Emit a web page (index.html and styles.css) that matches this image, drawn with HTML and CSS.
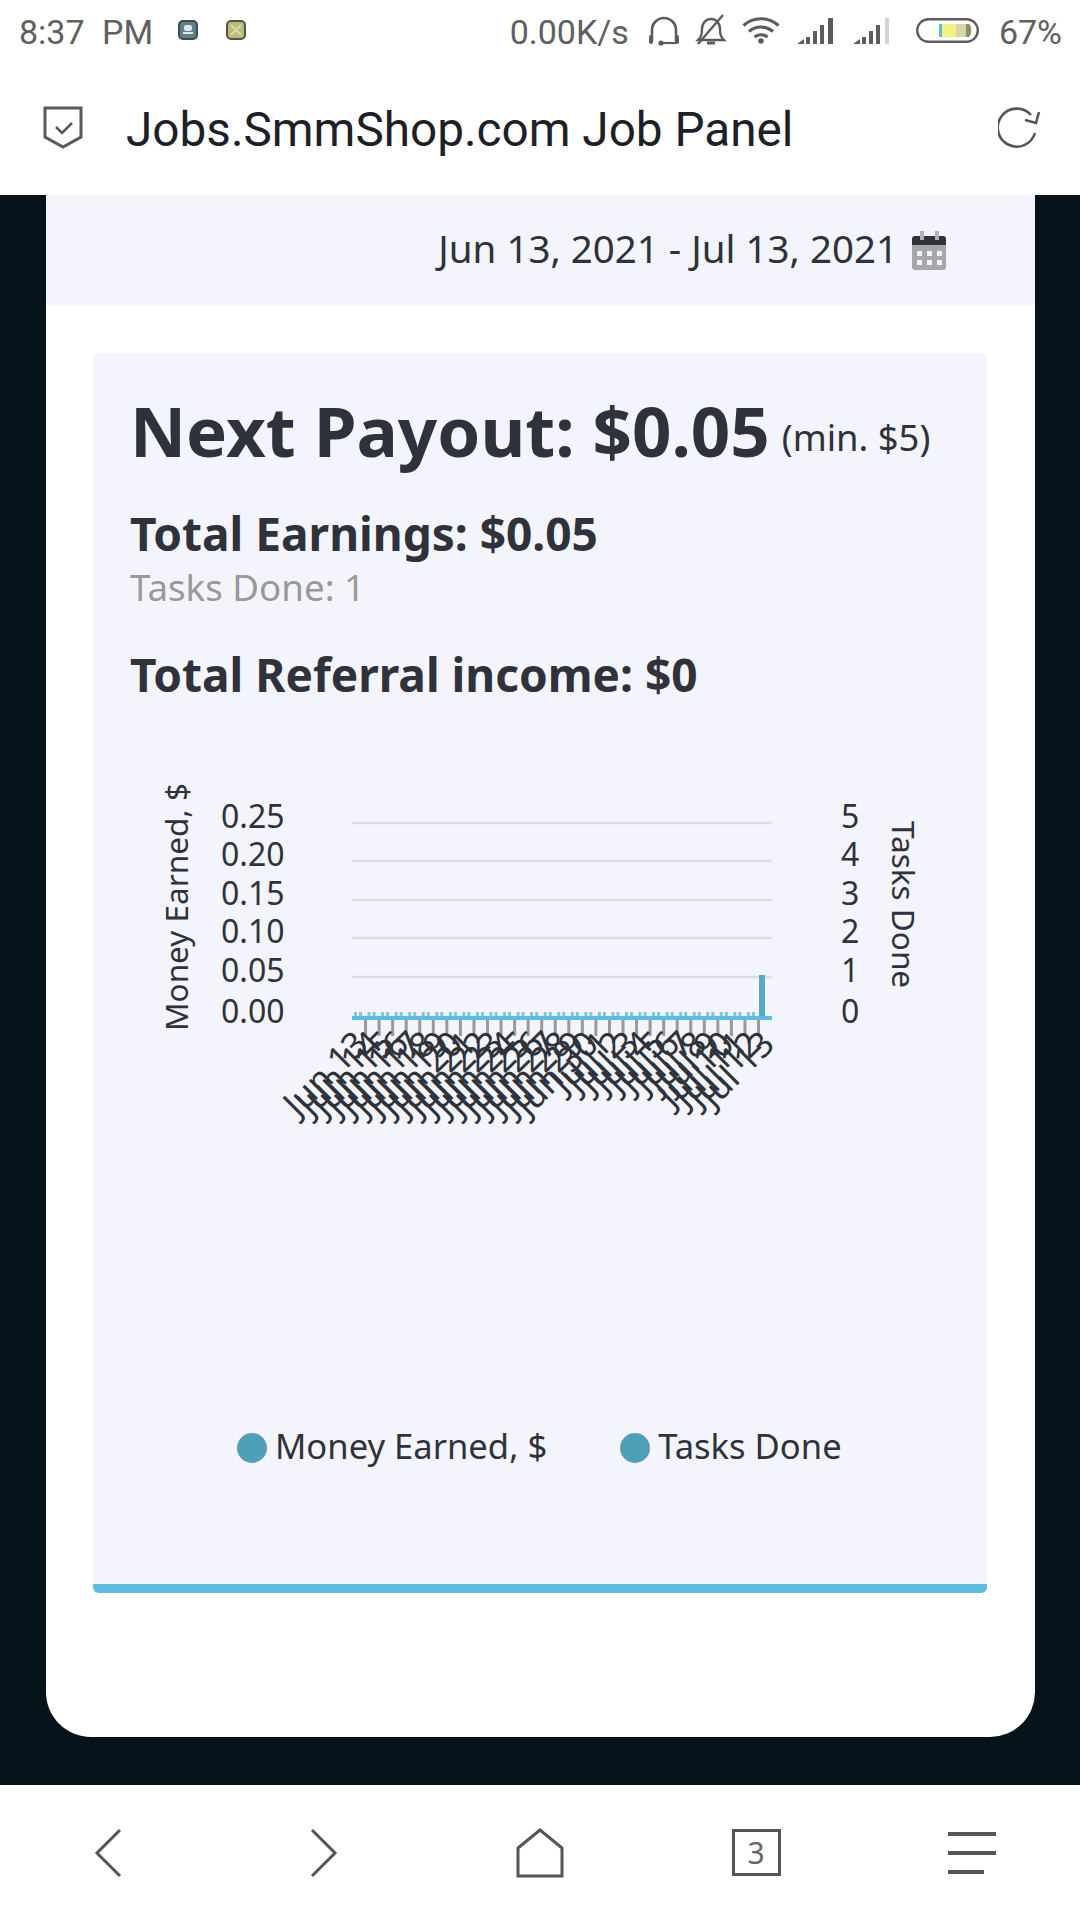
FILE: index.html
```html
<!DOCTYPE html>
<html lang="en">

<head>
    <meta charset="UTF-8">
    <meta name="viewport" content="width=device-width, initial-scale=1.0">
    <title>Jobs.SmmShop.com Job Panel</title>
    <link rel="stylesheet" href="styles.css">
</head>

<body>
    <div class="status">
        <div class="status-left">
            <span class="clock">8:37 PM</span>
            <svg class="notif notif-a" width="20" height="20" viewBox="0 0 20 20">
                <rect x="1" y="1" width="18" height="18" rx="4" fill="#5f7f88" stroke="#3f4a4e" stroke-width="2" />
                <rect x="6" y="5" width="8" height="6" rx="2" fill="#dfe6e8" />
                <path d="M5 13h10" stroke="#dfe6e8" stroke-width="2" />
            </svg>
            <svg class="notif notif-b" width="20" height="20" viewBox="0 0 20 20">
                <rect x="1" y="1" width="18" height="18" rx="4" fill="#b9bb7c" stroke="#55563f" stroke-width="2" />
                <path d="M5 5l10 10M15 5L5 15" stroke="#d9dba8" stroke-width="2" />
            </svg>
        </div>
        <div class="status-right">
            <span class="speed">0.00K/s</span>
            <svg class="ico-head" width="32" height="30" viewBox="0 0 32 30">
                <path d="M4 25V14a12 12 0 0 1 24 0v11" fill="none" stroke="#5c5c5c" stroke-width="2.6" />
                <rect x="1" y="19" width="4" height="9" rx="2" fill="#5c5c5c" />
                <rect x="27" y="19" width="4" height="9" rx="2" fill="#5c5c5c" />
                <path d="M12 27h16" stroke="#5c5c5c" stroke-width="2.2" />
                <circle cx="13" cy="27" r="2.6" fill="#5c5c5c" />
            </svg>
            <svg class="ico-bell" width="32" height="32" viewBox="0 0 32 32">
                <path d="M3 26c3-3 4-5 4-11s4-10 9-10 9 4 9 10 1 8 4 11z" fill="none" stroke="#5c5c5c" stroke-width="2.4" />
                <path d="M12 29h8" stroke="#5c5c5c" stroke-width="3" />
                <path d="M3 30L28 1" stroke="#5c5c5c" stroke-width="2.4" />
            </svg>
            <svg class="ico-wifi" width="38" height="28" viewBox="0 0 38 28">
                <path d="M1.5 9.5c10-9 25-9 35 0M7 15.5c7-6 17-6 24 0M12.5 21c3.500-3 9.500-3 13 0" fill="none" stroke="#5c5c5c" stroke-width="3.2" />
                <circle cx="19" cy="25" r="2.800" fill="#5c5c5c" />
            </svg>
            <svg class="ico-sig" width="38" height="26" viewBox="0 0 38 26">
                <path d="M0 26l7-5v5zM9 19h4v7H9zM16 13h4v13h-4zM23 7h4v19h-4zM31 0h5v26h-5z" fill="#5c5c5c" />
            </svg>
            <svg class="ico-sig2" width="38" height="26" viewBox="0 0 38 26">
                <path d="M0 26l7-5v5zM9 19h4v7H9zM16 13h4v13h-4zM23 7h4v19h-4z" fill="#5c5c5c" />
                <path d="M32 0h4v26h-4z" fill="#d4d4d4" />
            </svg>
            <svg class="ico-batt" width="63" height="25" viewBox="0 0 63 25">
                <rect x="1.200" y="1.200" width="60.600" height="22.600" rx="11.300" fill="#fff" stroke="#5c5c5c" stroke-width="2.400" />
                <rect x="23" y="6" width="3" height="13" fill="#5bbde4" />
                <rect x="26" y="6" width="14" height="13" fill="#f5f27f" />
                <rect x="40" y="6" width="10" height="13" fill="#d6d6a8" />
                <path d="M50 6h3c3 2 3 11 0 13h-3z" fill="#8f8f66" />
            </svg>
            <span class="batt-pct">67%</span>
        </div>
    </div>

    <header class="address">
        <svg class="shield" width="40" height="44" viewBox="0 0 40 44">
            <path d="M2 2h36v29L20 41 2 31z" fill="none" stroke="#5a5a5a" stroke-width="3" />
            <path d="M13 21l6 6 10-10" fill="none" stroke="#5a5a5a" stroke-width="2.600" />
        </svg>
        <span class="page-title">Jobs.SmmShop.com Job Panel</span>
        <svg class="reload" width="44" height="44" viewBox="0 0 44 44">
            <path d="M37 27A19 19 0 1 1 33 9" fill="none" stroke="#555" stroke-width="2.600" />
            <path d="M41 6l-3 11-11-3" fill="none" stroke="#555" stroke-width="2.600" />
        </svg>
    </header>

    <main class="backdrop">
        <div class="panel">
            <div class="range">
                <span>Jun 13, 2021 - Jul 13, 2021</span>
                <svg width="34" height="39" viewBox="0 0 34 39">
                    <path d="M0 14h34v22a3 3 0 0 1-3 3H3a3 3 0 0 1-3-3z" fill="#a6a7ac" />
                    <path d="M3 5h28a3 3 0 0 1 3 3v6H0V8a3 3 0 0 1 3-3z" fill="#2f323a" />
                    <rect x="8" y="0" width="4" height="9" fill="#b0b1b5" />
                    <rect x="23" y="0" width="4" height="9" fill="#b0b1b5" />
                    <path d="M5 20h5v5H5zM15 20h5v5h-5zM25 20h5v5h-5zM5 29h5v5H5zM15 29h5v5h-5zM25 29h5v5h-5z" fill="#f3f4fb" />
                </svg>
            </div>

            <section class="card">
                <h1 class="payout">Next Payout: $0.05 <small>(min. $5)</small></h1>
                <h2 class="earn">Total Earnings: $0.05</h2>
                <p class="tasks">Tasks Done: 1</p>
                <h2 class="earn referral">Total Referral income: $0</h2>

                <svg id="chart" class="chart" width="894" height="380" viewBox="93 780 894 380"></svg>

                <div class="legend">
                    <span class="legend-item"><i class="dot"></i>Money Earned, $</span>
                    <span class="legend-item"><i class="dot"></i>Tasks Done</span>
                </div>
            </section>
        </div>
    </main>

    <nav class="nav">
        <svg width="30" height="50" viewBox="0 0 30 50">
            <path d="M27 2L4 25l23 23" fill="none" stroke="#555" stroke-width="3" />
        </svg>
        <svg width="30" height="50" viewBox="0 0 30 50">
            <path d="M3 2l23 23L3 48" fill="none" stroke="#555" stroke-width="3" />
        </svg>
        <svg width="48" height="50" viewBox="0 0 48 50">
            <path d="M24 2L2 20v28h44V20z" fill="none" stroke="#555" stroke-width="3" />
        </svg>
        <div class="tabs">3</div>
        <div class="menu">
            <span></span>
            <span></span>
            <span class="short"></span>
        </div>
    </nav>

    <script src="chart.js"></script>
</body>

</html>
```

FILE: styles.css
```css
* {
    box-sizing: border-box;
}

body {
    margin: 0;
    width: 1080px;
    height: 1920px;
    display: flex;
    flex-direction: column;
    background-color: white;
    font-family: 'Noto Sans', sans-serif;
    color: #2f323a;
    overflow: hidden;
}

.status {
    height: 60px;
    padding: 13px 18px 0 19px;
    display: flex;
    justify-content: space-between;
    font-family: Roboto, sans-serif;
    font-size: 34px;
    color: #606060;
}

.status-left,
.status-right {
    display: flex;
    align-items: flex-start;
}

.clock {
    word-spacing: 9px;
    line-height: 38px;
}

.notif {
    margin-top: 7px;
}

.notif-a {
    margin-left: 25px;
}

.notif-b {
    margin-left: 28px;
}

.speed,
.batt-pct {
    line-height: 38px;
}

.ico-head {
    margin: 3px 0 0 19px;
}

.ico-bell {
    margin: 1px 0 0 15px;
}

.ico-wifi {
    margin: 3px 0 0 15px;
}

.ico-sig {
    margin: 5px 0 0 17px;
}

.ico-sig2 {
    margin: 5px 0 0 18px;
}

.ico-batt {
    margin: 5px 0 0 25px;
}

.batt-pct {
    margin-left: 20px;
}

.address {
    height: 135px;
    padding: 0 38px 0 43px;
    display: flex;
    align-items: center;
    font-family: Roboto, sans-serif;
}

.page-title {
    margin: 4px 0 0 43px;
    flex: 1;
    font-size: 47.7px;
    color: #1d2127;
}

.backdrop {
    flex: 1;
    padding: 0 45px 48px 46px;
    background-color: #06131a;
}

.panel {
    height: 100%;
    background-color: white;
    border-radius: 0 0 45px 45px;
}

.range {
    height: 110px;
    padding-right: 89px;
    display: flex;
    align-items: center;
    justify-content: flex-end;
    gap: 14px;
    background-color: #f4f5fc;
    font-size: 38.5px;
}

.range span {
    margin-bottom: 4px;
}

.card {
    height: 1240px;
    margin: 48px 48px 0 47px;
    padding: 35px 0 0 37px;
    background-color: #f4f5fc;
    border-bottom: 9px solid #5bbde4;
    border-radius: 6px;
}

.payout {
    margin: 0;
    font-size: 69px;
    line-height: 84px;
    font-weight: bold;
    white-space: nowrap;
}

.payout small {
    margin-left: -6px;
    font-size: 36.4px;
    line-height: 1;
    font-weight: normal;
    vertical-align: 6px;
}

.earn {
    margin: 33px 0 0;
    font-size: 46px;
    line-height: 56px;
    font-weight: bold;
}

.tasks {
    margin: 3px 0 0;
    font-size: 36.7px;
    line-height: 46px;
    color: #999;
}

.referral {
    margin-top: 36px;
}

.chart {
    display: block;
    margin: 79px 0 0 -37px;
}

.chart text {
    font-family: 'Noto Sans', sans-serif;
    font-size: 32px;
    fill: #2f323a;
}

.chart .axis-title {
    font-size: 31.5px;
}

.chart .day {
    font-size: 35px;
}

.legend {
    margin: 261px 0 0 107px;
    display: flex;
    gap: 73px;
    font-size: 34.6px;
}

.legend-item {
    display: flex;
    align-items: center;
    gap: 8px;
}

.dot {
    width: 30px;
    height: 30px;
    margin-top: 4px;
    border-radius: 50%;
    background-color: #4f9fb8;
}

.nav {
    height: 135px;
    display: grid;
    grid-template-columns: repeat(5, 1fr);
    justify-items: center;
    align-items: center;
}

.tabs {
    width: 49px;
    height: 47px;
    border: 3px solid #555;
    font-size: 30px;
    line-height: 41px;
    text-align: center;
    color: #666;
}

.menu {
    width: 48px;
    display: flex;
    flex-direction: column;
    gap: 15px;
}

.menu span {
    height: 4px;
    background-color: #555;
}

.menu .short {
    width: 36px;
}
```

FILE: chart.js
```js
const svg = document.getElementById('chart');
const ns = 'http://www.w3.org/2000/svg';

function add(tag, attrs, text) {
    const el = document.createElementNS(ns, tag);
    for (const key in attrs) el.setAttribute(key, attrs[key]);
    if (text) el.textContent = text;
    svg.appendChild(el);
}

const left = 352;
const right = 772;
const base = 1017;
const step = 13.55;
const rows = [976, 937, 899, 860, 822];

// grid lines and both y axes
['0.00', '0.05', '0.10', '0.15', '0.20', '0.25'].forEach((label, i) => {
    const y = i === 0 ? base : rows[i - 1];
    if (i > 0) add('line', { x1: left, x2: right, y1: y, y2: y, stroke: '#dcdde2', 'stroke-width': 2.5 });
    add('text', { x: 221, y: y + 5 }, label);
    add('text', { x: 841, y: y + 5 }, String(i));
});

add('text', { class: 'axis-title', transform: 'translate(188 1030) rotate(-90)' }, 'Money Earned, $');
add('text', { class: 'axis-title', transform: 'translate(892 820) rotate(90)' }, 'Tasks Done');

// one slot per day, Jun 13 to Jul 13
for (let i = 0; i < 31; i++) {
    const x = left + step * i;
    if (i < 30) {
        add('rect', { x: x + 2, y: 1011, width: 3, height: 5, fill: '#7cc6e6' });
        add('rect', { x: x + 7, y: 1011, width: 3, height: 5, fill: '#7cc6e6' });
    }
    if (i > 0) add('line', { x1: x, x2: x, y1: base, y2: 1035, stroke: '#999', 'stroke-width': 3 });

    const day = i < 18 ? 'Jun ' + (13 + i) : 'Jul ' + (i - 17);
    add('text', { class: 'day', 'text-anchor': 'end', transform: 'translate(' + (x + 18) + ' 1045) rotate(-45)' }, day);
}

add('rect', { x: 759, y: 974, width: 6, height: 42, fill: '#5aa9c6' });
add('line', { x1: left, x2: right, y1: base, y2: base, stroke: '#5bbde4', 'stroke-width': 4 });
```
